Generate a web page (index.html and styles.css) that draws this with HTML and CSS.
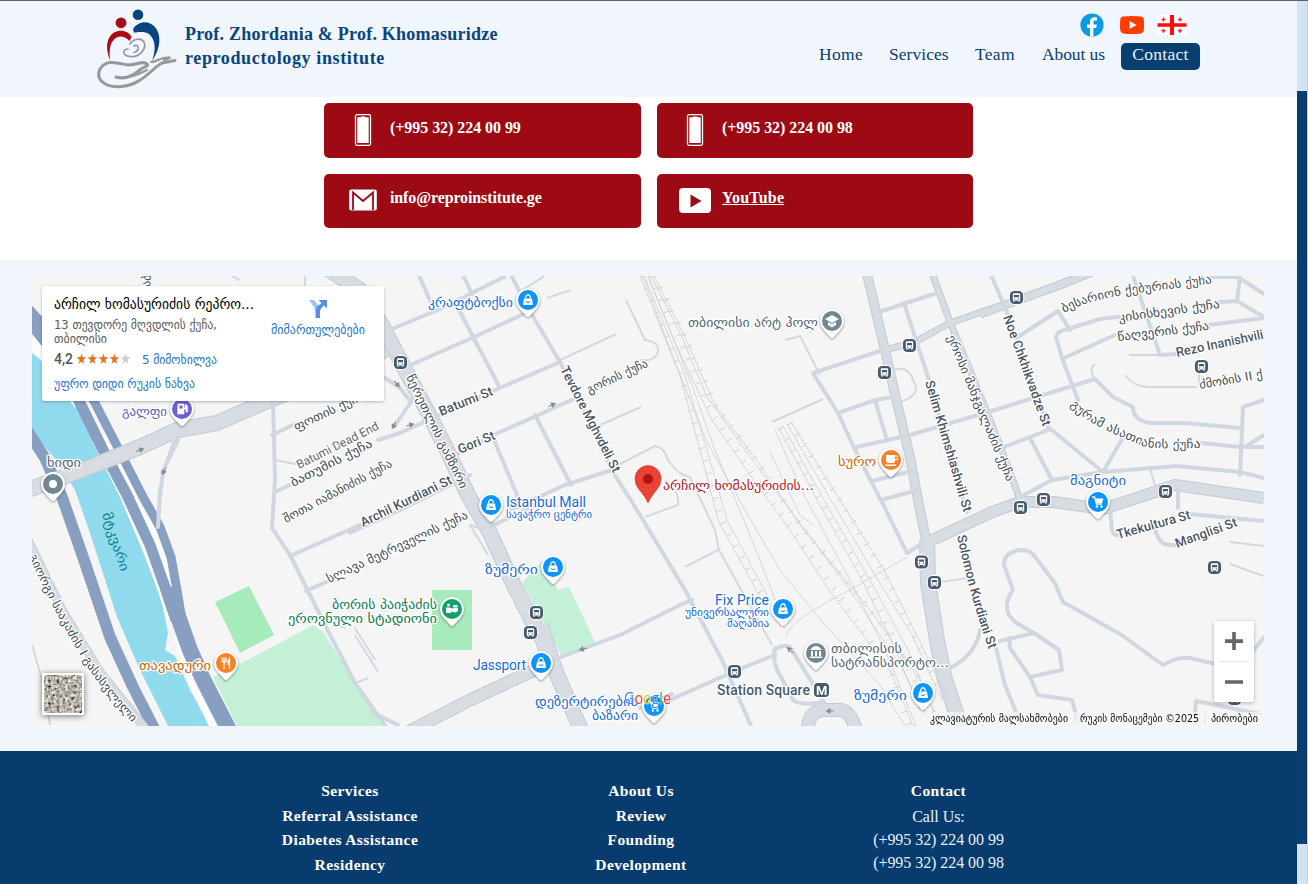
FILE: index.html
```html
<!DOCTYPE html>
<html lang="en">
<head>
<meta charset="utf-8">
<title>Reproductology Institute - Contact</title>
<link rel="stylesheet" href="styles.css">
</head>
<body>
<div class="shell">
<div class="page">
  <header class="header">
    <a class="brand">
      <svg class="brand-logo" viewBox="96 6 84 84">
        <circle cx="138" cy="15.800" r="5.300" fill="#0a4480"/>
        <circle cx="121" cy="23.800" r="5.400" fill="#ab0a16"/>
        <g transform="translate(0 1)">
        <path d="M110 60C105 48 106 34 118 31C124 30 129 32 131.500 37L129.500 41C125 36 119 35 114.500 39C110 43 109 50 110 60Z" fill="#ab0a16"/>
        <path d="M133 29C138 21 148 20 154 26C162 34 161 48 152 61C156 50 156 40 149 34C145 31 138 32 134 32.500Z" fill="#0a4480"/>
        <g fill="none" stroke="#95999c" stroke-linecap="round">
          <path d="M130 44C133 39 141 37 144 42C147 49 139 58 130 56.500C121 55 123 49 128 49M134 46C139 43 140 51 134 52.500" stroke-width="1.700"/>
          <path d="M116 77C124 80 133 76 141 69C146 66 149 66 147 64C143 60 137 65 128 65C117 63 106 59 100 69C95 80 106 88 121 86.500C142 85 151 69 162 63L175 60.500" stroke-width="3"/>
          <path d="M151 62C156 62 162 57 168 57.500C172 57 168 59 164 60M116 77C128 79 137 75 147 70" stroke-width="2.200"/>
        </g>
        </g>
      </svg>
      <span class="brand-name">Prof. Zhordania &amp; Prof. Khomasuridze<br><span class="brand-sub">reproductology institute</span></span>
    </a>
    <div class="header-right">
      <div class="social">
        <svg width="24" height="24" viewBox="0 0 24 24"><circle cx="12" cy="12" r="11.600" fill="#0b9be8"/><path d="M10 23.500V15H7V11.500h3V9c0-3.300 2-4.700 4.600-4.700.9 0 1.700.1 2.400.2v3h-1.700c-1.500 0-1.900.8-1.900 1.900v2.100h3.400l-.6 3.500h-2.800v8.500z" fill="#fff"/></svg>
        <svg width="24" height="18" viewBox="0 0 24 18"><path d="M3 .6Q12-.5 21 .6Q23.500.9 23.800 4Q24.300 9 23.800 14Q23.500 17 21 17.400Q12 18.500 3 17.400Q.5 17 .2 14Q-.3 9 .2 4Q.5.9 3 .6Z" fill="#ff3d00"/><path d="M9.500 5v8l7-4z" fill="#fff"/></svg>
        <svg width="30" height="20" viewBox="0 0 30 20"><rect width="30" height="20" rx="1" fill="#fff"/><path d="M13 0h4v8.200h12.500v3.600H17V20h-4v-8.200H.5V8.200H13z" fill="#fe0b12"/><path d="M6.500 2.500v4m-2-2h4M23 2.500v4m-2-2h4M6.500 13.800v4m-2-2h4M23 13.800v4m-2-2h4" stroke="#fe2a2f" stroke-width="1.500"/></svg>
      </div>
      <nav class="nav"><a>Home</a><a class="nav-services">Services</a><a>Team</a><a class="nav-about">About us</a><a class="nav-active">Contact</a></nav>
    </div>
  </header>

  <section class="contacts">
    <a class="contact"><svg viewBox="0 0 32 32"><rect x="8.500" y=".7" width="15" height="30.600" rx="1.500" fill="none" stroke="#fff" stroke-width="1.300"/><path d="M10.300 3.200h3.200l.5-.7h4l.5.700h3.200V29H10.300z" fill="#fff"/></svg><span>(+995 32) 224 00 99</span></a>
    <a class="contact"><svg viewBox="0 0 32 32"><rect x="8.500" y=".7" width="15" height="30.600" rx="1.500" fill="none" stroke="#fff" stroke-width="1.300"/><path d="M10.300 3.200h3.200l.5-.7h4l.5.700h3.200V29H10.300z" fill="#fff"/></svg><span>(+995 32) 224 00 98</span></a>
    <a class="contact"><svg viewBox="0 0 32 32"><rect x="2.200" y="5.500" width="27.600" height="21" rx="2" fill="#fff"/><path d="M6 26V8.500L16 17L26 8.500V26" fill="none" stroke="#9d0a14" stroke-width="1.800"/></svg><span class="mail">info@reproinstitute.ge</span></a>
    <a class="contact"><svg viewBox="0 0 32 32"><rect y="4" width="32" height="25" rx="4" fill="#fff"/><path d="M11.500 10.500v13l11-6.500z" fill="#9d0a14"/></svg><span class="linked">YouTube</span></a>
  </section>

  <section class="map-section">
    <div class="map">
      <svg class="map-canvas" viewBox="32 276 1232 450">
        <defs>
          <g id="pin"><path d="M-9 8.500L-1.500 16.500Q0 18 1.500 16.500L9 8.500Z" fill="#fff"/><circle r="12" fill="#fff"/><circle r="10" fill="currentColor"/></g>
          <g id="bag"><use href="#pin"/><path d="M-4-1.500H4L5 5H-5Z" fill="#fff"/><path d="M-2.300-1.500V-3.500Q0-7 2.300-3.500V-1.500" fill="none" stroke="#fff" stroke-width="1.300"/><path d="M-2 1.500Q0 4 2 1.500" fill="none" stroke="currentColor"/></g>
          <g id="cart"><use href="#pin"/><path d="M-6-5H-3.500L-1.500 2H4" fill="none" stroke="#fff" stroke-width="1.300"/><path d="M-3-3.500H5.500L4 1H-2Z" fill="#fff"/><circle cx="-1" cy="4.500" r="1.200" fill="#fff"/><circle cx="3.500" cy="4.500" r="1.200" fill="#fff"/></g>
          <g id="bus"><circle r="8" fill="#fff"/><rect x="-6.600" y="-6.600" width="13.200" height="13.200" rx="4.500" fill="#455a6e"/><path d="M-3.700-3Q-3.700-4.200-2.500-4.200H2.500Q3.700-4.200 3.700-3V3H3V4.300H1.800V3H-1.800V4.300H-3V3H-3.700Z" fill="#fff"/><path d="M-2.500-2.500h5v2.300h-5zM-2.500 1h1.200v1h-1.200zM1.300 1h1.200v1h-1.200z" fill="#455a6e"/></g>
          <g id="arrow"><path d="M-4 0H1M0-2L3.500 0L0 2Z" fill="#868c92" stroke="#868c92" stroke-width="1.100"/></g>
          <path id="t-saakadze" d="M29 556C48 600 70 638 88 668C101 687 116 705 134 725"/>
          <path id="t-besarion" d="M1064 313C1086 300 1120 295 1145 292S1190 286 1214 283"/>
          <path id="t-guram" d="M1070 405C1086 424 1117 435 1143 446C1160 450 1184 448 1202 448"/>
          <path id="t-solomon" d="M957 536C966 578 975 610 989 650"/>
          <filter id="terrain" x="0" y="0" width="100%" height="100%"><feTurbulence type="fractalNoise" baseFrequency=".35" numOctaves="4" seed="8"/><feColorMatrix values="1.300 .5 0 0 -.43 1.300 .5 0 0 -.45 1.250 .45 0 0 -.45 0 0 0 0 1"/></filter>
        </defs>

        <path class="water" d="M32 345L45 357L77 401L102 450L122 490L147 557L163 607L168 633L165 650L175 656L190 690L210 726H168L140 670L117 617L90 533L75 490L58 462L32 432Z"/>
        <path class="green" d="M215 602L249 586L274 635L240 653ZM432 590H472V650H432Z"/>
        <path class="park" d="M213 677L240 664L313 625L323 632L360 690L387 726H237ZM522 583L542 561L558 590L569 587L595 642L562 657Z"/>

        <g class="bank"><path d="M101 437L130 495L153 550L169 592L176 618M32 340L48 353L83 402"/><path d="M180 636L194 677L218 730" stroke-width="14"/></g>
        <g class="highway">
          <path d="M27 430L45 458L62 497L83 557L110 637L133 687L155 730" stroke-width="11.500"/>
          <path d="M28 320L52 350L80 403L103 450L127 495L150 545L166 590L176 620" stroke-width="11"/>
          <path d="M28 308L60 342L95 403L119 450L143 497L160 527L171 557L177 590L182 620" stroke-width="9"/>
          <path d="M168 588L180 622L190 650L202 677L212 697L229 730" stroke-width="16"/>
        </g>

        <g class="edge">
          <path d="M28 490L90 467L140 447L177 430L217 423L270 400L350 368L385 350" stroke-width="16"/>
          <path d="M322 265L360 290L383 327L400 360L423 403L447 450L468 495L490 533L510 577L530 617L547 647L558 677L582 732" stroke-width="16"/>
          <path d="M400 736L470 700L550 663" stroke-width="13"/>
          <path d="M540 625L550 660" stroke-width="18"/>
          <path d="M866 270L885 350L897 403L910 457L918 500L927 545" stroke-width="10"/>
          <path d="M927 540L928 583L937 640L945 680L962 730" stroke-width="16"/>
          <path d="M930 541L990 513L1020 502L1053 502L1103 509L1140 497L1175 485L1264 498" stroke-width="12"/>
          <path d="M980 314L1013 302L1057 286L1092 272" stroke-width="9"/>
          <path d="M884 350L913 343L950 323L990 309" stroke-width="7"/>
          <path d="M931 270L950 322L970 370L1000 445L1020 500" stroke-width="7"/>
          <path d="M28 540L62 610L100 672L145 728" stroke-width="9"/>
          <path d="M808 730Q808 710 825 710H840Q850 710 856 730" stroke-width="14"/>
        </g>
        <g class="major">
          <path d="M28 490L90 467L140 447L177 430L217 423L270 400L350 368L385 350" stroke-width="14"/>
          <path d="M322 265L360 290L383 327L400 360L423 403L447 450L468 495L490 533L510 577L530 617L547 647L558 677L582 732" stroke-width="14"/>
          <path d="M400 736L470 700L550 663" stroke-width="11"/>
          <path d="M540 625L550 660" stroke-width="16"/>
          <path d="M866 270L885 350L897 403L910 457L918 500L927 545" stroke-width="8"/>
          <path d="M927 540L928 583L937 640L945 680L962 730" stroke-width="14"/>
          <path d="M930 541L990 513L1020 502L1053 502L1103 509L1140 497L1175 485L1264 498" stroke-width="10"/>
          <path d="M980 314L1013 302L1057 286L1092 272" stroke-width="7"/>
          <path d="M884 350L913 343L950 323L990 309" stroke-width="5"/>
          <path d="M931 270L950 322L970 370L1000 445L1020 500" stroke-width="5"/>
          <path d="M28 540L62 610L100 672L145 728" stroke-width="7"/>
          <path d="M808 730Q808 710 825 710H840Q850 710 856 730" stroke-width="12"/>
        </g>

        <g class="street">
          <path d="M418 273L432 305M462 273L472 294M510 273L528 308L560 362L613 472L640 515L685 590L722 660L752 728"/>
          <path d="M392 329L440 309L504 277M413 364L474 337L528 312M459 310L500 388M560 362L500 388L440 415L400 433L378 440"/>
          <path d="M384 377L400 388L411 402L394 427M455 455L500 432L534 417L578 397M535 415L571 485M494 440L520 502M510 510L565 485L612 470M350 533L400 510L470 475"/>
          <path d="M273 400L275 480L272 528L290 555L325 625L355 683L387 728M272 435L295 424M275 492L300 480M290 556L360 525M306 591L335 578M162 473L178 440M160 495L163 473L175 440M158 527L160 490"/>
          <path d="M553 660L620 635L680 605L692 600M645 711L735 671L775 655M492 526L540 503M372 712L398 725M640 708L672 694"/>
          <path d="M775 648Q772 664 780 675L793 700M774 650Q782 644 790 647L824 702Q800 706 793 700"/>
          <path d="M813 373L883 350M813 373L838 413L855 450L885 508L907 553L923 543M838 413L875 400L893 397M875 400L886 437M857 447L910 435L985 413L1095 379M872 481L912 471M881 500L918 490"/>
          <path d="M879 312L934 294M904 303L928 377L967 512M990 273L1005 307L1048 427L1103 472L1122 439M1004 447L1048 430M1030 438L1052 480M1020 497L1052 480L1103 472L1177 466L1240 472L1264 478"/>
          <path d="M1018 337L1058 311L1070 330M1078 400L1062 358L1056 337Q1057 331 1068 329L1100 319L1125 316M1064 358L1115 335M1095 379L1113 397L1133 407Q1133 420 1150 423H1185L1240 428M1133 276L1160 355L1177 354"/>
          <path d="M1200 277H1238L1264 294M1240 278L1237 301L1264 317M1220 302L1237 301M1208 325L1264 318M1201 443L1240 447L1264 447M1240 475L1243 407L1264 400M1245 447L1264 435"/>
          <path d="M1110 510L1112 530Q1113 536 1120 535M1178 490L1178 508M1190 514L1264 521M1155 530Q1160 546 1170 545H1178"/>
          <path d="M1055 583L1063 602L1120 634L1163 665Q1178 656 1190 658L1216 664M1055 583L1032 553Q1028 550 1020 550Q1003 553 1004 565L1013 590Q1003 604 1009 615L1015 622L1034 633L1000 641"/>
          <path d="M1034 633L1059 650L1062 670L1030 677L1010 648L1009 638M1030 677L1038 695L1072 700L1078 722M996 648L1005 685L1020 722M950 668Q976 655 980 630M1194 726L1196 701L1260 714M1254 650L1264 637"/>
        </g>
        <g class="thin">
          <path d="M626 300L645 340Q660 342 658 352Q655 362 640 360M560 360L616 334M600 425L641 407M547 298L571 290M522 290L545 276"/>
          <path d="M618 465L655 446Q665 448 668 460Q678 475 690 477L715 530L719 550L772 645M685 567L720 549M645 517L678 505Q680 490 665 480M355 635L378 672M355 628L375 660M356 683L368 678"/>
          <path d="M785 340L800 336L820 375M772 422L823 399M893 370Q908 365 913 380Q923 395 900 402M940 582L968 578M275 460L300 465M32 645L45 690L50 725M484 530L470 525L488 555"/>
          <path d="M786 636Q790 620 850 590L907 557" stroke-width="1"/>
          <path d="M1129 355H1160M1125 375Q1135 388 1150 387H1197M1095 379Q1088 370 1095 364M1199 368V385M1230 542L1264 546M1230 564L1264 576M1150 468L1155 486M326 620L345 628M220 270L240 280M305 290V276"/>
        </g>

        <g class="rails">
          <path d="M640 276L680 375L700 450L718 520L760 597M644 276L685 375L707 450L727 520L767 595M648 276L690 380L715 450L760 560L775 600M643 276L672 355L706 440L745 510L780 570L825 625L880 685L905 726M648 276L676 345L712 420L750 475L790 530L830 592L890 670L913 726M651 276L680 333L707 397L745 450L790 510L850 590L900 665L932 726M654 276L684 335L715 405L760 465L800 525L870 610L920 680L940 726"/>
          <path d="M775 430L804 495L850 580L885 650L916 726M779 428L817 500L862 580L895 648L920 710M783 426L824 500L870 580L908 650L940 726M787 424L831 500L878 580L912 635L942 700M791 422L840 500L884 570L914 630L948 700M770 452L800 515L813 525"/>
        </g>
        <g class="ties">
          <path d="M642 276L680 372L702 450L722 520L763 597M650 276L680 340L707 405L746 465L785 520L835 590L890 670L910 726M654 276L684 335L715 405L760 465L800 525L870 610L920 680L940 726"/>
          <path d="M780 428L820 500L865 580L900 650L928 710M790 423L840 500L882 570L914 635L945 700"/>
        </g>

        <use href="#arrow" transform="translate(140 450) rotate(-20)"/><use href="#arrow" transform="translate(164 471) rotate(115)"/><use href="#arrow" transform="translate(397 384) rotate(50)"/><use href="#arrow" transform="translate(394 425) rotate(120)"/><use href="#arrow" transform="translate(410 425) rotate(-15)"/><use href="#arrow" transform="translate(552 405) rotate(-23)"/><use href="#arrow" transform="translate(583 649) rotate(165)"/><use href="#arrow" transform="translate(790 650) rotate(225)"/><use href="#arrow" transform="translate(830 711) rotate(180)"/>

        <g class="label street-name">
          <text transform="translate(441 416) rotate(-22)" textLength="57">Batumi St</text>
          <text transform="translate(460 454) rotate(-23)" textLength="39">Gori St</text>
          <text transform="translate(560 369) rotate(63)" textLength="117">Tevdore Mghvdeli St</text>
          <text transform="translate(925 382) rotate(73.500)" textLength="136">Selim Khimshiashvili St</text>
          <text transform="translate(1003 317) rotate(70)" textLength="117">Noe Chkhikvadze St</text>
          <text transform="translate(1177 357) rotate(-12)" textLength="89">Rezo Inanishvili</text>
          <text transform="translate(1118 539) rotate(-15.500)" textLength="76">Tkekultura St</text>
          <text transform="translate(1177 548) rotate(-20)" textLength="65">Manglisi St</text>
          <text transform="translate(363 527) rotate(-26)" textLength="100">Archil Kurdiani St</text>
          <text><textPath href="#t-solomon" textLength="118">Solomon Kurdiani St</textPath></text>
          <text class="plain" transform="translate(299 469) rotate(-26.500)" textLength="90">Batumi Dead End</text>
          <text class="station" x="717" y="695" textLength="93">Station Square</text>
        </g>
        <g class="label ka street-ka">
          <text transform="translate(589 394) rotate(-25)" textLength="66" lengthAdjust="spacingAndGlyphs">გორის ქუჩა</text>
          <text transform="translate(406 377) rotate(64)" textLength="125" lengthAdjust="spacingAndGlyphs">წერეთლის გამზირი</text>
          <text transform="translate(947 337) rotate(67.500)" textLength="157" lengthAdjust="spacingAndGlyphs">ეროსი მანჯგალაძის ქუჩა</text>
          <text transform="translate(1119 322) rotate(-8)" textLength="102" lengthAdjust="spacingAndGlyphs">კისისხევის ქუჩა</text>
          <text transform="translate(1118 341) rotate(-7)" textLength="92" lengthAdjust="spacingAndGlyphs">წაღვერის ქუჩა</text>
          <text transform="translate(1200 389) rotate(-10)" textLength="64" lengthAdjust="spacingAndGlyphs">ძმობის II ქ</text>
          <text transform="translate(296 431) rotate(-25)" textLength="76" lengthAdjust="spacingAndGlyphs">ფოთის ქუჩა</text>
          <text transform="translate(293 487) rotate(-27)" textLength="90" lengthAdjust="spacingAndGlyphs">ბათუმის ქუჩა</text>
          <text transform="translate(286 523) rotate(-28)" textLength="121" lengthAdjust="spacingAndGlyphs">შოთა იამანიძის ქუჩა</text>
          <text transform="translate(329 583) rotate(-25)" textLength="154" lengthAdjust="spacingAndGlyphs">სლავა მეტრეველის ქუჩა</text>
          <text><textPath href="#t-saakadze" textLength="197" lengthAdjust="spacingAndGlyphs">გიორგი სააკაძის I გასასვლელი</textPath></text>
          <text><textPath href="#t-besarion" textLength="152" lengthAdjust="spacingAndGlyphs">ბესარიონ ქებურიას ქუჩა</textPath></text>
          <text><textPath href="#t-guram" textLength="142" lengthAdjust="spacingAndGlyphs">გურამ ასათიანის ქუჩა</textPath></text>
          <text transform="translate(150 287) rotate(-85)">აბ</text>
        </g>
        <text class="ka river" transform="translate(102 514) rotate(72)" textLength="61" lengthAdjust="spacingAndGlyphs">მტკვარი</text>

        <g class="label ka place">
          <g class="slate"><text x="47" y="467" textLength="34" lengthAdjust="spacingAndGlyphs">ხიდი</text>
          <text x="688" y="327" textLength="130" lengthAdjust="spacingAndGlyphs">თბილისი არტ ჰოლ</text>
          <text x="831" y="653" textLength="71" lengthAdjust="spacingAndGlyphs">თბილისის</text>
          <text x="831" y="667" textLength="118" lengthAdjust="spacingAndGlyphs">სატრანსპორტო...</text></g>
          <g class="blue"><text x="428" y="307" textLength="85" lengthAdjust="spacingAndGlyphs">კრაფტბოქსი</text>
          <text x="1070" y="485" textLength="56" lengthAdjust="spacingAndGlyphs">მაგნიტი</text>
          <text class="latin" x="506" y="507" textLength="80">Istanbul Mall</text>
          <text class="small" x="506" y="518" textLength="86" lengthAdjust="spacingAndGlyphs">სავაჭრო ცენტრი</text>
          <text x="485" y="574" textLength="53" lengthAdjust="spacingAndGlyphs">ზუმერი</text>
          <text class="latin" x="473" y="670" textLength="53">Jassport</text>
          <text x="535" y="706" textLength="103" lengthAdjust="spacingAndGlyphs">დეზერტირების</text>
          <text x="592" y="720" textLength="46" lengthAdjust="spacingAndGlyphs">ბაზარი</text>
          <text class="latin" x="715" y="605" textLength="54">Fix Price</text>
          <text class="small" x="685" y="616" textLength="84" lengthAdjust="spacingAndGlyphs">უნივერსალური</text>
          <text class="small" x="727" y="627" textLength="42" lengthAdjust="spacingAndGlyphs">მაღაზია</text>
          <text x="854" y="700" textLength="53" lengthAdjust="spacingAndGlyphs">ზუმერი</text></g>
          <g class="orange"><text x="838" y="466" textLength="38" lengthAdjust="spacingAndGlyphs">სურო</text>
          <text x="139" y="670" textLength="72" lengthAdjust="spacingAndGlyphs">თავადური</text></g>
          <text class="violet" x="122" y="416" textLength="45" lengthAdjust="spacingAndGlyphs">გალფი</text>
          <g class="emerald"><text x="332" y="609" textLength="105" lengthAdjust="spacingAndGlyphs">ბორის პაიჭაძის</text>
          <text x="288" y="623" textLength="149" lengthAdjust="spacingAndGlyphs">ეროვნული სტადიონი</text></g>
          <text class="crimson" x="663" y="490" textLength="151" lengthAdjust="spacingAndGlyphs">არჩილ ხომასურიძის...</text>
        </g>

        <g class="pins blue-pin">
          <use href="#bag" x="528" y="300"/><use href="#bag" x="491" y="505"/><use href="#bag" x="553" y="567"/><use href="#bag" x="541" y="663"/><use href="#bag" x="783" y="609"/><use href="#bag" x="923" y="693"/><use href="#cart" x="1098" y="502"/><use href="#cart" x="654" y="706"/>
        </g>
        <g class="pins slate-pin">
          <use href="#pin" x="832" y="321"/><path d="M825 319L832 315L839 319L832 323ZM828 322V325L832 327.500L836 325V322L832 324Z" fill="#fff"/>
          <use href="#pin" x="816" y="653"/><path d="M810 650Q816 642 822 650ZM811 651H813V656H811ZM815 651H817V656H815ZM819 651H821V656H819ZM810 656.500H822V658H810Z" fill="#fff"/>
          <use href="#pin" x="53" y="484"/><circle cx="53" cy="484" r="4" fill="#fff"/>
        </g>
        <g class="pins orange-pin">
          <use href="#pin" x="891" y="460"/><path d="M886 455H895V461Q895 463 893 463H888Q886 463 886 461ZM885 464.500H896V466H885Z" fill="#fff"/><path d="M895 456H897.500V459.500H895" fill="none" stroke="#fff"/>
          <use href="#pin" x="226" y="663"/><path d="M222 657.500V662M224 657.500V669M226 657.500V662M222 662H226M229.500 669V658.500Q227.500 661 228 664H229.500" fill="none" stroke="#fff" stroke-width="1.300"/>
        </g>
        <g class="pins violet-pin"><use href="#pin" x="182" y="409"/><path d="M178 404H184V414H177.500ZM184 409H186V412H187.500V406L185.500 404" fill="#fff" stroke="#fff" stroke-width=".6"/><path d="M179.500 405.500H182.500V408.500H179.500Z" fill="currentColor"/></g>
        <g class="pins emerald-pin"><use href="#pin" x="452" y="609"/><path d="M446 607.500H450Q452 609 454 608H458V611Q456 613.500 452 611.500L450.500 613H446ZM453 605H457.500V607.500H453Z" fill="#fff"/><circle cx="448.500" cy="605" r="1.500" fill="#fff"/></g>

        <use href="#bus" x="400.500" y="362.500"/><use href="#bus" x="536.500" y="612.500"/><use href="#bus" x="530.500" y="632.500"/><use href="#bus" x="909.500" y="345.500"/><use href="#bus" x="884.500" y="372.500"/><use href="#bus" x="1016.500" y="297.500"/><use href="#bus" x="1201.500" y="366.500"/><use href="#bus" x="1165.500" y="491.500"/><use href="#bus" x="1043.500" y="499.500"/><use href="#bus" x="1020.500" y="507.500"/><use href="#bus" x="921.500" y="562"/><use href="#bus" x="934.500" y="582.500"/><use href="#bus" x="734.500" y="671.500"/><use href="#bus" x="1214.500" y="567.500"/><use href="#bus" x="1234.500" y="698.500"/>
        <rect x="812.500" y="681.500" width="18" height="17" rx="5" fill="#fff"/><rect x="814" y="683" width="15" height="14" rx="4" fill="#455a6e"/><text class="metro" x="816" y="694.500">M</text>

        <path d="M648 503Q646 498 639.500 490Q635 485 635 478.500A13 13 0 0 1 661 478.500Q661 485 656.500 490Q650 498 648 503Z" fill="#ea4335" stroke="#d23a2d" stroke-width=".6"/><circle cx="648" cy="479" r="5" fill="#b31412"/>

        <text class="google" x="624" y="704" textLength="47" lengthAdjust="spacingAndGlyphs"><tspan fill="#4285f4">G</tspan><tspan fill="#ea4335">o</tspan><tspan fill="#fbbc04">o</tspan><tspan fill="#4285f4">g</tspan><tspan fill="#34a853">l</tspan><tspan fill="#ea4335">e</tspan></text>
        <rect x="926" y="712" width="338" height="14" fill="#f5f5f5" opacity=".75"/>
        <path d="M1074.500 713V724M1205.500 713V724" stroke="#e2e5e8"/>
        <g class="ka legal">
          <text x="930" y="722" textLength="138" lengthAdjust="spacingAndGlyphs">კლავიატურის მალსახმობები</text>
          <text x="1080" y="722" textLength="119" lengthAdjust="spacingAndGlyphs">რუკის მონაცემები ©2025</text>
          <text x="1211" y="722" textLength="47" lengthAdjust="spacingAndGlyphs">პირობები</text>
        </g>
        <g class="thumb"><rect x="42" y="673" width="42" height="42" rx="1" fill="#fff"/><rect x="44" y="675" width="38" height="38" filter="url(#terrain)"/></g>
      </svg>

      <div class="place-card">
        <svg class="place-card-content" viewBox="42 286 342 115">
          <g class="ka">
            <text class="card-title" x="54" y="309" textLength="200" lengthAdjust="spacingAndGlyphs">არჩილ ხომასურიძის რეპრო...</text>
            <g class="card-text"><text x="54" y="329" textLength="163" lengthAdjust="spacingAndGlyphs">13 თევდორე მღვდლის ქუჩა,</text>
            <text x="54" y="343" textLength="53" lengthAdjust="spacingAndGlyphs">თბილისი</text></g>
            <text class="card-rating" x="54" y="364" textLength="19">4,2</text>
            <g class="card-link"><text x="142" y="364" textLength="75" lengthAdjust="spacingAndGlyphs">5 მიმოხილვა</text>
            <text x="54" y="388" textLength="141" lengthAdjust="spacingAndGlyphs">უფრო დიდი რუკის ნახვა</text>
            <text x="271" y="334" textLength="94" lengthAdjust="spacingAndGlyphs">მიმართულებები</text></g>
            <text class="stars" x="76" y="364" textLength="55" lengthAdjust="spacingAndGlyphs">★★★★<tspan class="star-off">★</tspan></text>
          </g>
          <path d="M309 300H314L319 306L317 312Q315 311 314.500 308Z" fill="#a6c4f6"/>
          <path d="M315.500 318V311Q315.500 307 319 305L321.500 303L318.500 300H327V308.500L324 305.500L321.500 308Q320 309.500 320 312V318Z" fill="#5a8eeb"/>
        </svg>
      </div>
      <div class="zoom-control"><svg viewBox="0 0 40 81"><path d="M11 18.300H29V22H11ZM18.200 11H21.800V29H18.200ZM11 59.200H29V62.800H11Z" fill="#666"/><path d="M5 40.500H35" stroke="#e6e6e6"/></svg></div>
    </div>
  </section>

  <footer class="footer">
    <div class="footer-col"><b>Services</b><b>Referral Assistance</b><b>Diabetes Assistance</b><b>Residency</b></div>
    <div class="footer-col"><b>About Us</b><b>Review</b><b>Founding</b><b>Development</b></div>
    <div class="footer-col footer-contact"><b>Contact</b><span>Call Us:</span><span>(+995 32) 224 00 99</span><span>(+995 32) 224 00 98</span></div>
  </footer>
</div>
<div class="scrollbar"><div class="scroll-thumb"></div></div>
</div>
</body>
</html>
```
FILE: styles.css
```css
* { box-sizing: border-box; }
body { margin: 0; font-family: "Liberation Serif", serif; color: #083e72; background: #fff; }
svg { display: block; }
.shell { display: grid; grid-template-columns: 1297px 11px; height: 884px; overflow: hidden; border-top: 1px solid #5f6170; }
.page { height: 883px; overflow: hidden; }
.header { height: 96px; background: #f1f6fd; display: flex; justify-content: space-between; padding: 4px 97px 0 97px; }
.brand { display: flex; gap: 5px; }
.brand-logo { width: 84px; height: 84px; margin-left: -1px; }
.brand-name { font-size: 18px; line-height: 24px; font-weight: 700; padding-top: 17px; letter-spacing: .23px; white-space: nowrap; color: #0a4480; }
.brand-sub { letter-spacing: .63px; }
.header-right { display: flex; flex-direction: column; align-items: flex-end; padding-top: 8px; }
.social { display: flex; align-items: center; height: 24px; padding-right: 13px; }
.social svg:nth-child(2) { margin: 0 13px 0 16px; }
.nav { display: grid; grid-template-columns: 70px 86px 67px 79px 79px; height: 27px; margin: 6px 0 0; font-size: 17.500px; line-height: 23px; letter-spacing: .3px; white-space: nowrap; }
.nav-services { letter-spacing: .05px; }
.nav-about { letter-spacing: -.1px; }
.nav-active { background: #083e70; color: #e9f4ff; border-radius: 5px; text-align: center; }
.contacts { display: grid; grid-template-columns: 317px 316px; grid-template-rows: 55px 54px; gap: 16px; height: 163px; padding: 6px 0 0 324px; }
.contact { display: flex; align-items: flex-start; gap: 11px; padding: 11px 22px; border-radius: 5px; background: #9d0a14; color: #fff; font-size: 16px; font-weight: 700; line-height: 28px; letter-spacing: -.05px; }
.contact svg { width: 32px; height: 32px; }
.contact:nth-child(n+3) svg { margin-top: -1px; }
.contact:nth-child(n+3) span { margin-top: -1px; }
.contact:nth-child(odd) { padding-left: 23px; }
.contact .mail { letter-spacing: -.12px; }
.contact .linked { text-decoration: underline; letter-spacing: .2px; }
.map-section { height: 491px; padding: 16px 33px 25px 32px; background: #f1f6fd; }
.map { position: relative; width: 1232px; height: 450px; overflow: hidden; background: #f5f5f5; }
.map-canvas { width: 1232px; height: 450px; }
.water { fill: #90daee; }
.green { fill: #a7eabc; }
.park { fill: #c3f0d7; }
.highway, .edge, .major, .street, .thin, .rails, .ties, .bank { fill: none; stroke-linejoin: round; }
.bank { stroke: #fafcfd; stroke-width: 20; }
.highway { stroke: #889fc1; }
.edge { stroke: #c2cad4; }
.major { stroke: #d7dce2; }
.street { stroke: #d0d7e0; stroke-width: 4; stroke-linecap: round; }
.thin { stroke: #d3d8df; stroke-width: 2; }
.rails { stroke: #cecece; stroke-width: .8; }
.ties { stroke: #d3d3d3; stroke-width: 6; stroke-dasharray: 1 12; }
.label text { paint-order: stroke; stroke: #fff; stroke-width: 2.500px; stroke-linejoin: round; }
.street-name { font: 500 13px Roboto, sans-serif; fill: #4b5563; }
.street-name .plain { font-weight: 400; font-size: 12px; fill: #5f6570; }
.street-name .station { font-size: 14px; fill: #455a6e; }
.ka { font-family: "DejaVu Sans", sans-serif; }
.street-ka { font-size: 12px; fill: #434b56; }
.river { font-size: 13px; fill: #0d8490; }
.place { font-size: 12.500px; }
.place .latin { font: 14px Roboto, sans-serif; }
.place .small { font-size: 10px; }
.slate { fill: #546674; }
.blue { fill: #1569df; }
.orange { fill: #d65f00; }
.violet { fill: #5a57c4; }
.emerald { fill: #077c49; }
.crimson { fill: #bf1018; }
.pins { filter: drop-shadow(0 1px 1px #0006); }
.blue-pin { color: #0b94fb; }
.slate-pin { color: #728792; }
.orange-pin { color: #fb8025; }
.violet-pin { color: #6b62cf; }
.emerald-pin { color: #14a06a; }
.metro { font: 700 13px Roboto, sans-serif; fill: #fff; }
.google { font: 17px "Open Sans", sans-serif; stroke: #fff; stroke-width: .5px; paint-order: stroke; }
.legal { font-size: 10px; fill: #111; }
.thumb { filter: drop-shadow(0 1px 3px #0008); }
.place-card { position: absolute; left: 10px; top: 10px; width: 342px; height: 115px; background: #fff; border-radius: 2px; box-shadow: 0 1px 3px #0004; }
.place-card-content { width: 342px; height: 115px; }
.card-title { font-size: 14px; fill: #000; }
.card-text { font-size: 12px; fill: #5b5b5b; }
.card-rating { font: 500 14px Roboto, sans-serif; fill: #555; }
.card-link { font-size: 12px; fill: #1f74d8; }
.stars { font-size: 15px; fill: #e7711b; }
.star-off { fill: #ccc; }
.zoom-control { position: absolute; right: 10px; top: 345px; width: 40px; height: 81px; background: #fff; border-radius: 2px; box-shadow: 0 1px 4px #0004; }
.footer { display: grid; grid-template-columns: 200px 200px 200px; column-gap: 91px; height: 133px; padding: 28px 0 0 250px; background: #083c6e; color: #fff; }
.footer-col { display: flex; flex-direction: column; align-items: center; font-size: 16px; line-height: 24.700px; white-space: nowrap; }
.footer-col b { font-size: 15.500px; letter-spacing: .4px; }
.footer-contact { padding-left: 13px; }
.footer-contact span { line-height: 23px; color: #e6f0fa; letter-spacing: -.05px; }
.footer-contact b { margin-bottom: 1px; }
.scrollbar { background: #d3e3f1; padding-top: 90px; border-right: 1px solid #b4d7e9; }
.scroll-thumb { height: 753px; background: #083e70; border-right: 1px solid #0a2f5c; }
```
